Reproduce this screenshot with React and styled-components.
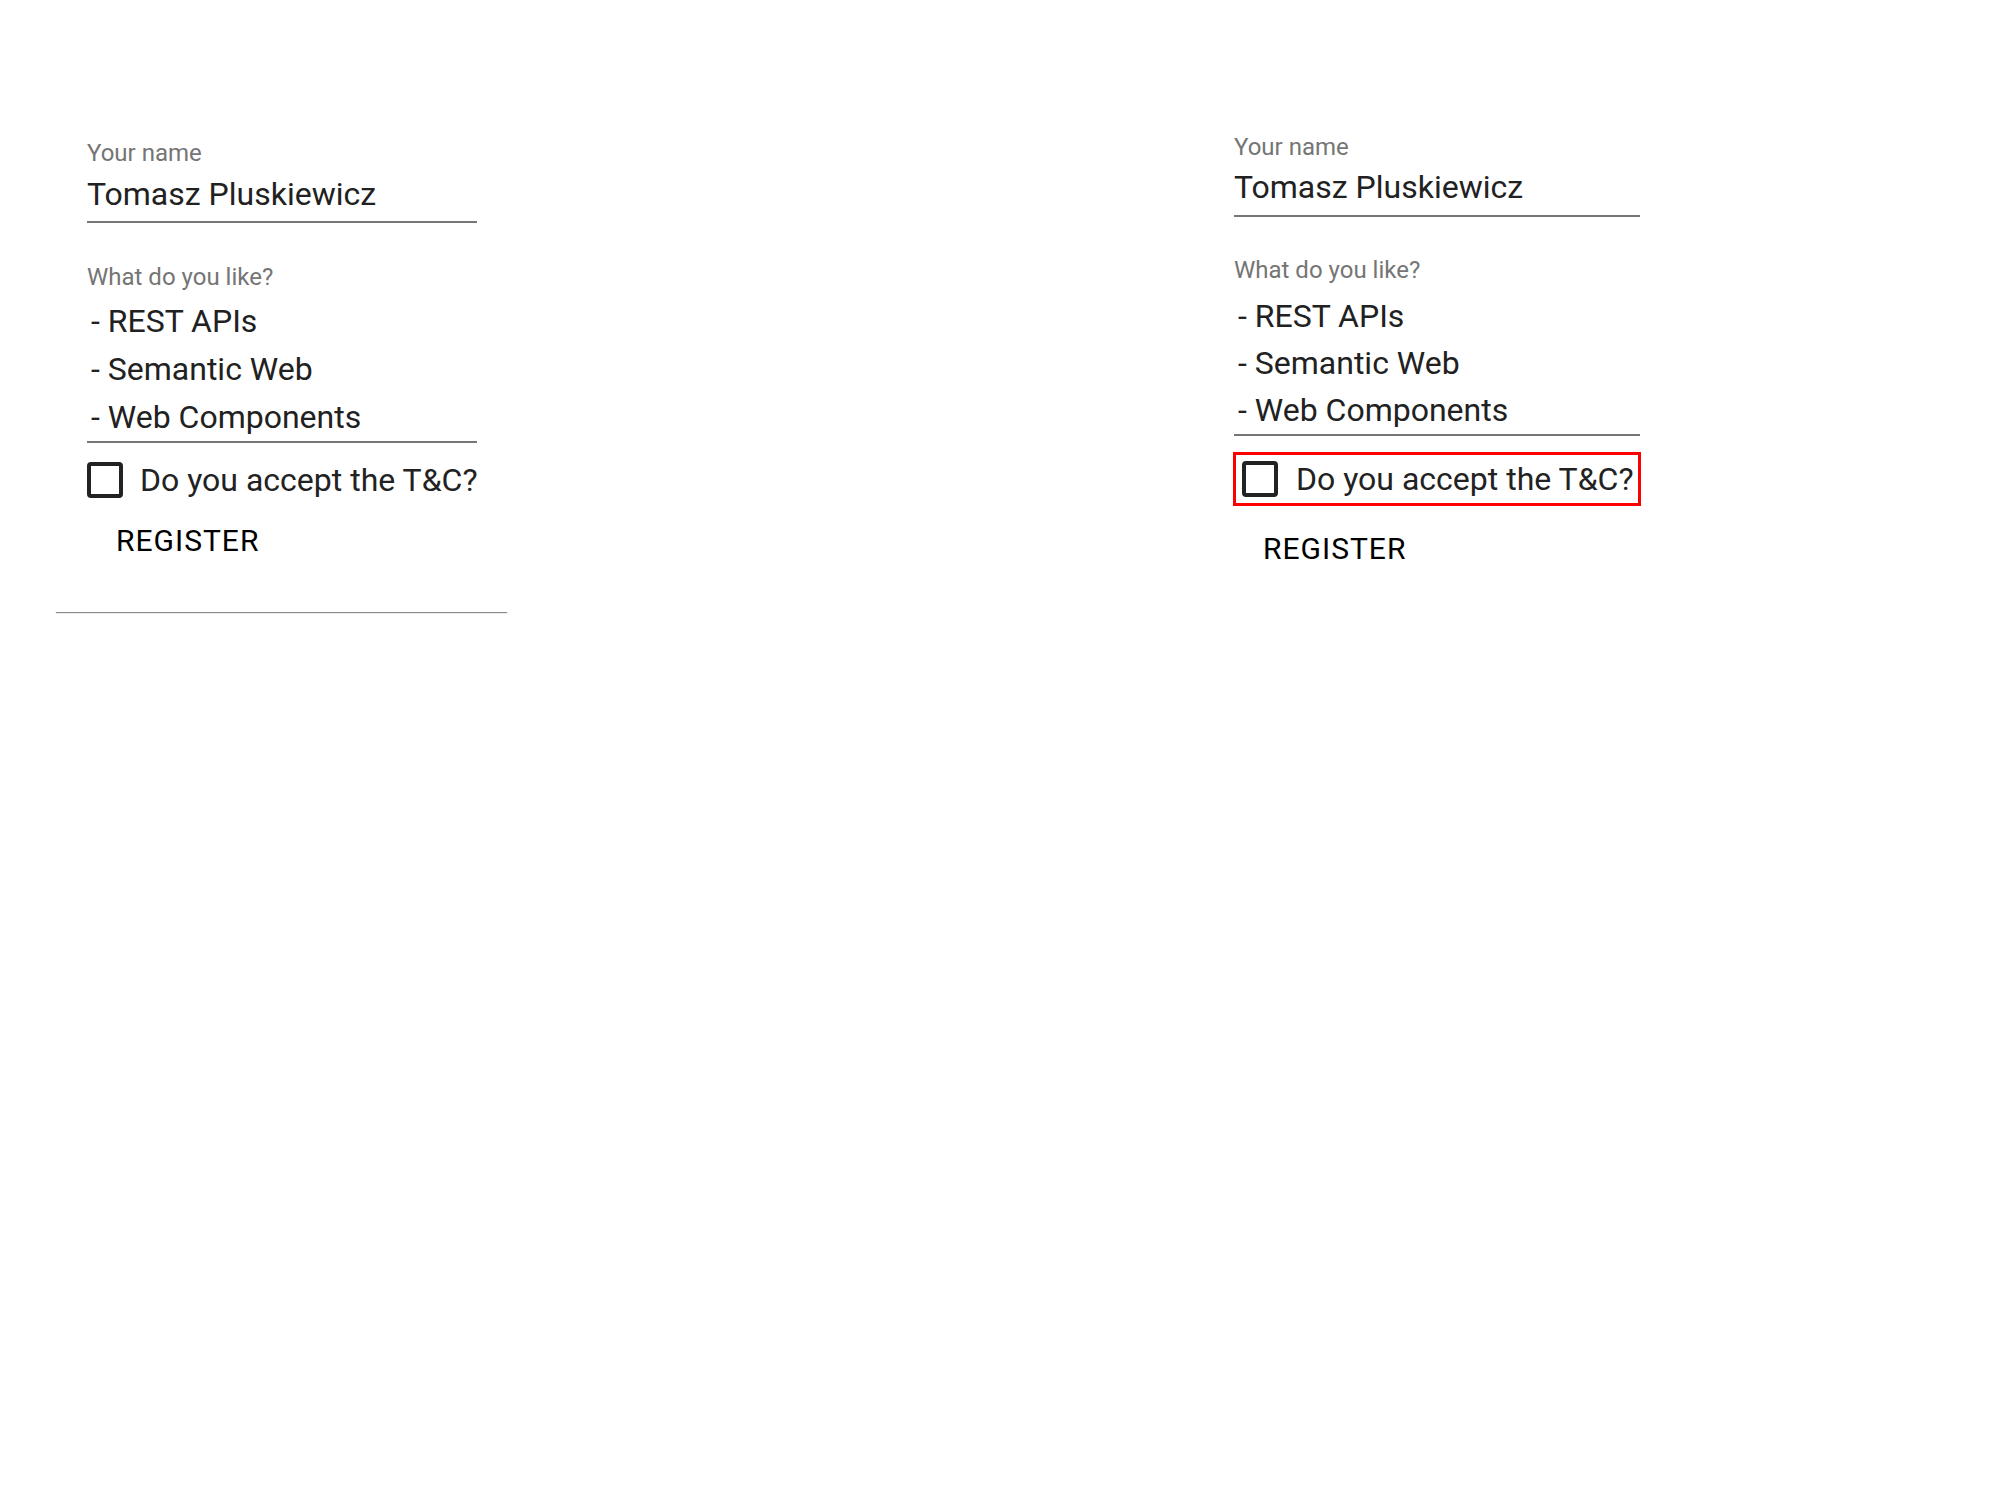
import React from 'react'
import styled, { createGlobalStyle } from 'styled-components'

const GlobalStyle = createGlobalStyle`
  html, body {
    margin: 0;
    padding: 0;
    background: #fff;
  }
  body {
    font-family: Roboto, "Noto Sans", "Liberation Sans", sans-serif;
    color: #212121;
  }
`

const Page = styled.div`
  display: flex;
  align-items: flex-start;
  gap: 695px;
  padding: 100px 0 0 55px;
  min-height: 1400px;
  box-sizing: border-box;
`

const Card = styled.form`
  display: flex;
  flex-direction: column;
  box-sizing: border-box;
  width: ${(p) => p.$width}px;
  padding: ${(p) => p.$padTop}px ${(p) => p.$padRight}px 53px ${(p) => p.$padLeft}px;
  background: #fff;
  box-shadow: ${(p) =>
    p.$flat ? '0 1px 1px -1px rgba(0, 0, 0, 0.04)' : '0 2px 1px -1px rgba(0, 0, 0, 0.45)'};
`

const Label = styled.label`
  display: block;
  font-size: 24px;
  line-height: 28px;
  color: #757575;
  margin-top: ${(p) => p.$gap || 0}px;
`

const NameInput = styled.input`
  display: block;
  width: 100%;
  box-sizing: border-box;
  margin: ${(p) => p.$gap}px 0 0;
  padding: 0 0 ${(p) => p.$padBottom}px;
  border: 0;
  border-bottom: 2px solid #767676;
  outline: none;
  background: transparent;
  font-family: inherit;
  font-size: 32px;
  line-height: 40px;
  height: ${(p) => 40 + p.$padBottom + 2}px;
  color: #212121;
`

const Choices = styled.div`
  display: flex;
  flex-direction: column;
  margin-top: ${(p) => p.$gap}px;
  border-bottom: 2px solid #767676;
`

const Choice = styled.div`
  font-size: 32px;
  line-height: ${(p) => p.$line}px;
  padding-left: 4px;
  color: #212121;
  white-space: nowrap;
`

const CheckRow = styled.label`
  display: flex;
  align-items: center;
  gap: ${(p) => p.$gapX}px;
  margin-top: ${(p) => p.$gap}px;
  padding: ${(p) => (p.$focused ? '6px' : '0')};
  border: ${(p) => (p.$focused ? '3px solid #ff0000' : '0')};
  margin-left: ${(p) => (p.$focused ? -1 : 0)}px;
  margin-right: ${(p) => (p.$focused ? -1 : 0)}px;
`

const Box = styled.span`
  flex: none;
  width: 36px;
  height: 36px;
  box-sizing: border-box;
  border: 4px solid #222;
  border-radius: 4px;
`

const CheckText = styled.span`
  font-size: 32px;
  line-height: 36px;
  color: #222;
  white-space: nowrap;
`

const Button = styled.button`
  align-self: flex-start;
  margin: ${(p) => p.$gap}px 0 0 29px;
  padding: 0;
  border: 0;
  background: transparent;
  font-family: inherit;
  font-size: 30px;
  line-height: 36px;
  letter-spacing: 1px;
  color: #000;
  cursor: pointer;
`

const layouts = {
  left: {
    width: 453,
    padTop: 39,
    padLeft: 32,
    padRight: 31,
    inputGap: 7,
    inputPad: 7,
    labelGap: 40,
    listGap: 6,
    listLine: 48,
    checkGap: 19,
    checkGapX: 17,
    buttonGap: 25,
  },
  right: {
    width: 467,
    padTop: 33,
    padLeft: 31,
    padRight: 30,
    inputGap: 6,
    inputPad: 8,
    labelGap: 39,
    listGap: 9,
    listLine: 47,
    checkGap: 16,
    checkGapX: 18,
    buttonGap: 25,
  },
}

const likes = ['- REST APIs', '- Semantic Web', '- Web Components']

function RegisterForm({ layout, focused, flat }) {
  const l = layouts[layout]
  return (
    <Card
      $width={l.width}
      $padTop={l.padTop}
      $padLeft={l.padLeft}
      $padRight={l.padRight}
      $flat={flat}
      onSubmit={(e) => e.preventDefault()}
    >
      <Label>Your name</Label>
      <NameInput readOnly value="Tomasz Pluskiewicz" $gap={l.inputGap} $padBottom={l.inputPad} />
      <Label $gap={l.labelGap}>What do you like?</Label>
      <Choices $gap={l.listGap}>
        {likes.map((item) => (
          <Choice key={item} $line={l.listLine}>
            {item}
          </Choice>
        ))}
      </Choices>
      <CheckRow $gap={l.checkGap} $gapX={l.checkGapX} $focused={focused}>
        <Box />
        <CheckText>Do you accept the T&amp;C?</CheckText>
      </CheckRow>
      <Button type="button" $gap={l.buttonGap}>
        REGISTER
      </Button>
    </Card>
  )
}

export default function App() {
  return (
    <>
      <GlobalStyle />
      <Page>
        <RegisterForm layout="left" />
        <RegisterForm layout="right" focused flat />
      </Page>
    </>
  )
}
